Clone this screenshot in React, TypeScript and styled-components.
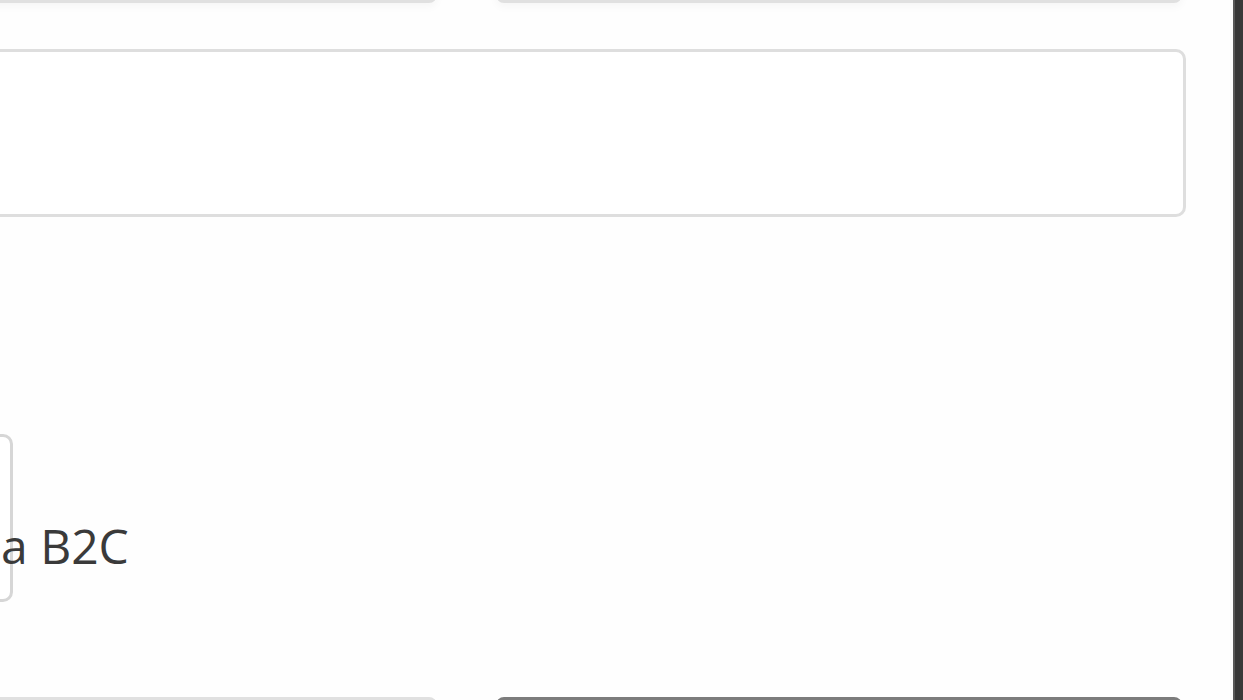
import React from "react";
import styled, { createGlobalStyle } from "styled-components";

const Global = createGlobalStyle`
  html, body { margin: 0; padding: 0; height: 700px; overflow: hidden; background: #ffffff; }
  #root { height: 700px; }
  * { box-sizing: border-box; }
`;

const Stage = styled.div`
  display: flex;
  width: 1243px;
  height: 700px;
  font-family: "Open Sans", "Noto Sans", sans-serif;
`;

const Main = styled.main`
  flex: 1;
  overflow: hidden;
  background: #fefefe;
`;

const Scrollbar = styled.div`
  width: 10px;
  background: #393939;
  border-left: 2px solid #5a5a5a;
`;

const Form = styled.form`
  display: flex;
  flex-direction: column;
  width: 1486px;
  margin-left: -300px;
`;

const FieldRow = styled.div<{ $top: number }>`
  display: grid;
  grid-template-columns: 737px 686px;
  column-gap: 59px;
  margin-top: ${(p) => p.$top}px;
  height: 100px;
`;

const Input = styled.div<{ $dark?: boolean; $edge: "top" | "bottom" }>`
  border: 3px solid ${(p) => (p.$dark ? "#7c7c7c" : "#e0e0e0")};
  border-radius: 8px;
  background: ${(p) => (p.$dark ? "#8a8a8a" : "#ffffff")};
  box-shadow: ${(p) =>
    p.$edge === "bottom" ? "0 4px 8px rgba(0,0,0,0.035)" : "none"};
`;

const TextArea = styled.div`
  margin-top: 46px;
  height: 168px;
  width: 100%;
  border: 3px solid #dedede;
  border-radius: 10px;
  background: #ffffff;
`;

const OptionRow = styled.div`
  display: flex;
  margin-top: 217px;
  height: 168px;
`;

const OptionCard = styled.div`
  width: 313px;
  height: 168px;
  border: 3px solid #d6d6d6;
  border-radius: 10px;
  background: #ffffff;
`;

const OptionLabel = styled.span`
  margin-left: -12px;
  margin-top: 88px;
  font-size: 48px;
  line-height: 48px;
  color: #3a3a3a;
  white-space: nowrap;
`;

export default function App() {
  return (
    <>
      <Global />
      <Stage>
        <Main>
          <Form>
            <FieldRow $top={-97}>
              <Input $edge="bottom" />
              <Input $edge="bottom" />
            </FieldRow>
            <TextArea />
            <OptionRow>
              <OptionCard />
              <OptionLabel>a B2C</OptionLabel>
            </OptionRow>
            <FieldRow $top={95}>
              <Input $edge="top" />
              <Input $edge="top" $dark />
            </FieldRow>
          </Form>
        </Main>
        <Scrollbar />
      </Stage>
    </>
  );
}
